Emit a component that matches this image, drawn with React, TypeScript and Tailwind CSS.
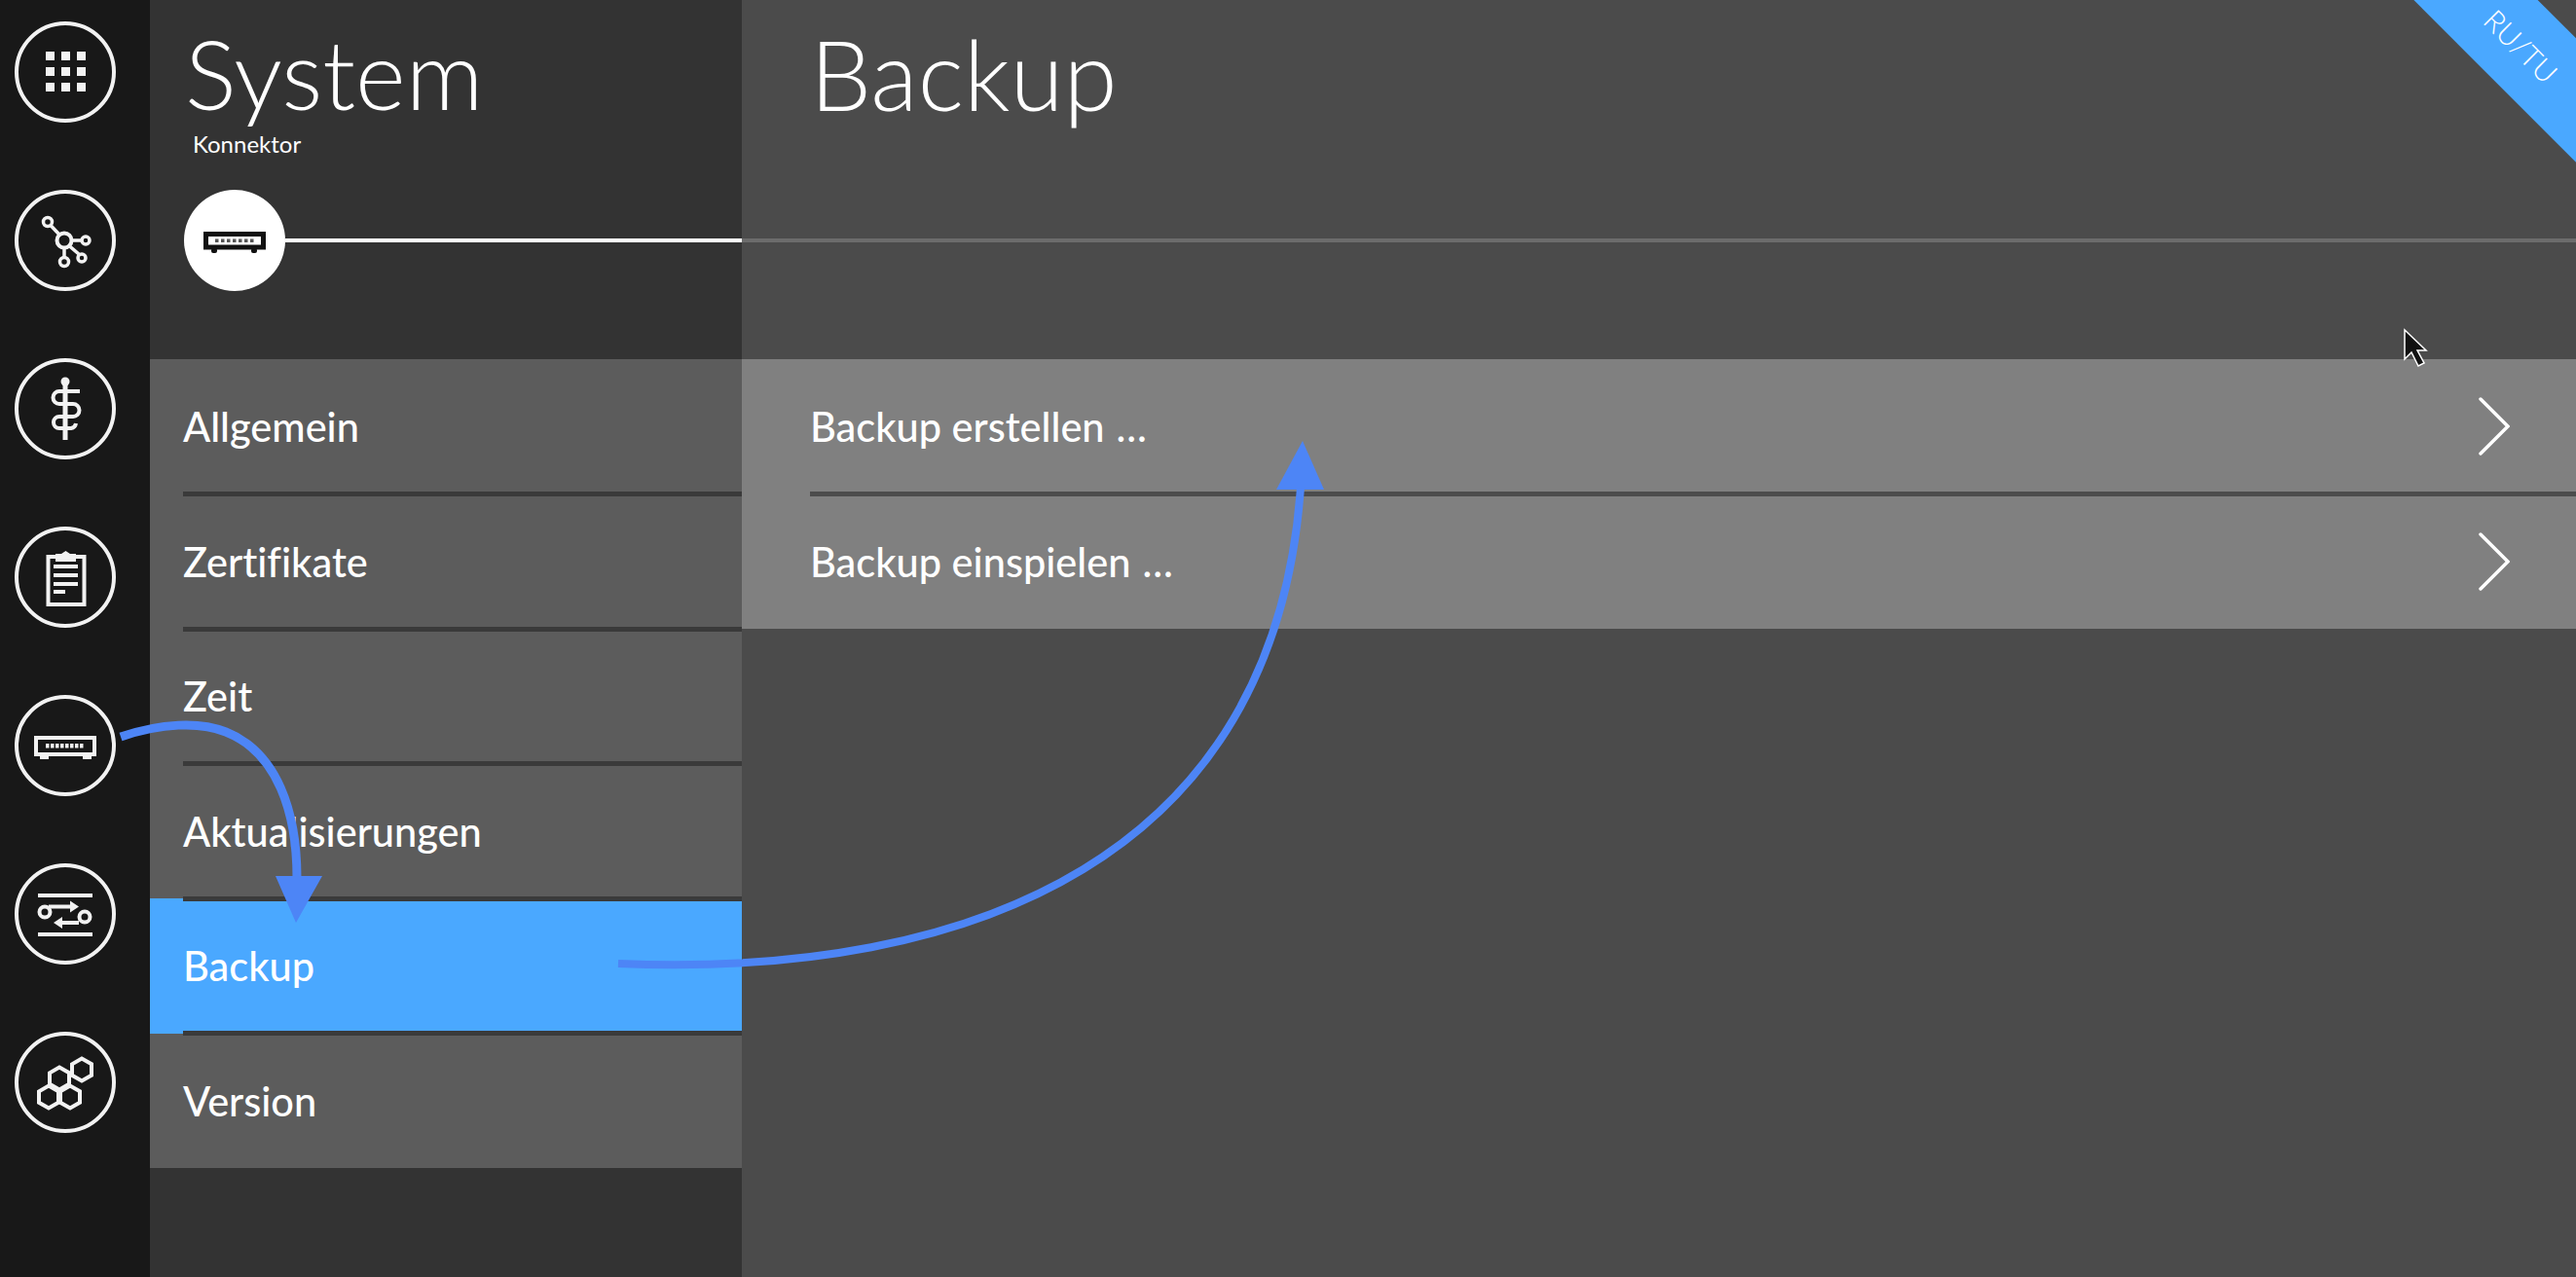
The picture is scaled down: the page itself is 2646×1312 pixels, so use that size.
const FONT = "font-['Lato','Open_Sans',sans-serif]";

const menuItems = ['Allgemein', 'Zertifikate', 'Zeit', 'Aktualisierungen', 'Backup', 'Version'];
const backupItems = ['Backup erstellen', 'Backup einspielen'];

const hexPoints = (cx: number, cy: number, r: number) =>
  [0, 1, 2, 3, 4, 5]
    .map((i) => {
      const a = (Math.PI / 3) * i + Math.PI / 6;
      return `${(cx + r * Math.cos(a)).toFixed(1)},${(cy + r * Math.sin(a)).toFixed(1)}`;
    })
    .join(' ');

function GridIcon() {
  return (
    <g fill="currentColor" stroke="none">
      {[31, 47, 63].map((y) =>
        [32, 48, 64].map((x) => <rect key={`${x}-${y}`} x={x} y={y} width="9" height="9" />),
      )}
    </g>
  );
}

function NetworkIcon() {
  return (
    <g>
      <circle cx="51" cy="52" r="7.5" strokeWidth="4" />
      <circle cx="34" cy="33" r="4.5" />
      <circle cx="73" cy="52" r="4" />
      <circle cx="69" cy="70" r="4" />
      <circle cx="51" cy="74" r="4.5" />
      <path d="M37 36.5 46 46M58.5 52H69M56 57.5 66.5 66.5M51 59.5V69.5" />
    </g>
  );
}

function RodIcon() {
  return (
    <g>
      <circle cx="52" cy="24" r="4.5" fill="currentColor" stroke="none" />
      <path d="M52 26V84" strokeWidth="5" />
      <path d="M67 34H46a6.5 6.5 0 0 0 0 13H60a6.5 6.5 0 0 1 0 13H46a6 6 0 0 0 0 12H58a6 6 0 0 0 5-5" strokeWidth="4" />
    </g>
  );
}

function ClipboardIcon() {
  return (
    <g strokeWidth="4">
      <path d="M42 31H34.5V80H71.5V31H63" />
      <path d="M42 28H48L52.5 25 57 28H63V36H42Z" fill="currentColor" stroke="none" />
      <path d="M40 41H65M40 50H65M40 59H65M40 67H52" />
    </g>
  );
}

function SwitchIcon() {
  return (
    <g>
      <rect x="22" y="44" width="60" height="17" strokeWidth="4" />
      <path d="M26 64H35M70 64H79" strokeWidth="4" />
      <g fill="currentColor" stroke="none">
        {[32, 37, 42, 47, 52, 57, 62, 67].map((x) => (
          <rect key={x} x={x} y="50" width="3.5" height="4.5" />
        ))}
      </g>
    </g>
  );
}

// heavier variant used on the white step marker
function ConnectorMarkIcon() {
  return (
    <g fill="#111111">
      <rect x="22.5" y="45.5" width="59" height="13.5" fill="none" stroke="#111111" strokeWidth="5" />
      <rect x="28" y="60" width="6" height="5" rx="2" />
      <rect x="69" y="60" width="6" height="5" rx="2" />
      {[32, 38, 44, 50, 56, 62, 68].map((x) => (
        <rect key={x} x={x} y="50.5" width="3.5" height="3.5" fill="#555555" />
      ))}
    </g>
  );
}

function ExchangeIcon() {
  return (
    <g strokeWidth="4">
      <path d="M24 33H80M24 73H80" />
      <circle cx="31" cy="50" r="5.5" />
      <circle cx="72" cy="55" r="5.5" />
      <path d="M35 44.5H58M66 61H48" />
      <path d="M57 38.5 66 44.5 57 50.5ZM49 55 40 61 49 67Z" fill="currentColor" stroke="none" />
    </g>
  );
}

function HexIcon() {
  return (
    <g strokeWidth="4">
      <polygon points={hexPoints(35, 67, 11.5)} />
      <polygon points={hexPoints(57, 67, 11.5)} />
      <polygon points={hexPoints(46, 48, 11.5)} />
      <polygon points={hexPoints(69, 39, 11.5)} />
    </g>
  );
}

function RailButton({ children }: { children: React.ReactNode }) {
  return (
    <svg width="104" height="104" viewBox="0 0 104 104" fill="none" stroke="currentColor" strokeWidth="3.5" className="shrink-0 text-[#f2f2f2]">
      <circle cx="52" cy="52" r="50" strokeWidth="4" />
      {children}
    </svg>
  );
}

export default function App() {
  return (
    <div className={`relative flex h-[1312px] w-[2646px] overflow-hidden text-white [font-variant-ligatures:none] ${FONT}`}>
      {/* Icon rail */}
      <nav className="flex w-[154px] shrink-0 flex-col gap-[69px] bg-[#181818] pt-[22px] pl-[15px]">
        <RailButton><GridIcon /></RailButton>
        <RailButton><NetworkIcon /></RailButton>
        <RailButton><RodIcon /></RailButton>
        <RailButton><ClipboardIcon /></RailButton>
        <RailButton><SwitchIcon /></RailButton>
        <RailButton><ExchangeIcon /></RailButton>
        <RailButton><HexIcon /></RailButton>
      </nav>

      {/* Menu column */}
      <aside className="flex w-[608px] shrink-0 flex-col bg-[#333333]">
        <header className="h-[369px] pt-[15px]">
          <h1 className="pl-[36px] text-[99px] leading-[120px] font-light">System</h1>
          <p className="mt-[-2px] pl-[44px] text-[24px] leading-[30px] font-normal">Konnektor</p>
          <div className="mt-[32px] flex items-center pl-[35px]">
            <div className="flex h-[104px] w-[104px] items-center justify-center rounded-full bg-white">
              <svg width="104" height="104" viewBox="0 0 104 104">
                <ConnectorMarkIcon />
              </svg>
            </div>
            <div className="h-[4px] flex-1 bg-white" />
          </div>
        </header>
        <ul>
          {menuItems.map((item, i) => (
            <li
              key={item}
              className={`relative flex h-[138.5px] items-center pl-[34px] text-[41.5px] font-medium ${
                item === 'Backup' ? 'bg-[#4aa8ff]' : 'bg-[#5c5c5c]'
              }`}
            >
              {item}
              {i < menuItems.length - 1 && (
                <span className="absolute right-0 bottom-[-2.5px] left-[34px] z-10 h-[5px] bg-[#3a3a3a]" />
              )}
            </li>
          ))}
        </ul>
      </aside>

      {/* Detail column */}
      <main className="flex flex-1 flex-col bg-[#4b4b4b]">
        <header className="h-[369px] pt-[15px]">
          <h2 className="pl-[70px] text-[100px] leading-[120px] font-light">Backup</h2>
          <div className="mt-[110px] h-[4px] bg-[#6c6c6c]" />
        </header>
        <ul>
          {backupItems.map((item, i) => (
            <li key={item} className="relative flex h-[138.5px] items-center justify-between bg-[#808080] pr-[68px] pl-[70px] text-[41.5px] font-medium">
              <span>
                {item}
                <span className="ml-[12px] tracking-[3px]">…</span>
              </span>
              <svg width="32" height="60" viewBox="0 0 32 60" fill="none" stroke="white" strokeWidth="3.5" strokeLinecap="round">
                <path d="M2 2 30 30 2 58" />
              </svg>
              {i === 0 && <span className="absolute right-0 bottom-[-2.5px] left-[70px] z-10 h-[5px] bg-[#4c4c4c]" />}
            </li>
          ))}
        </ul>
      </main>

      {/* RU/TU corner ribbon */}
      <div className="absolute top-[1.5px] right-[-144px] flex h-[90px] w-[400px] rotate-45 items-center justify-center bg-[#4aa8ff] text-[30px] font-light">
        RU/TU
      </div>

      {/* Annotation arrows and pointer over the screenshot */}
      <svg className="pointer-events-none absolute top-0 left-0 z-20" width="2646" height="1312" viewBox="0 0 2646 1312" fill="none">
        <path d="M124 757C165 743 205 741 232 752C285 773 305 835 305 902" stroke="#4d85f6" strokeWidth="9" />
        <path d="M283 900H331L304 948Z" fill="#4d85f6" />
        <path d="M635 990C1000 1005 1310 880 1336 500" stroke="#4d85f6" strokeWidth="8" />
        <path d="M1311 503H1360L1338 453Z" fill="#4d85f6" />
        <path d="M2470 339V369L2477 362L2484 376L2490 373L2483 360H2492Z" fill="#111111" stroke="white" strokeWidth="1.5" />
      </svg>
    </div>
  );
}
